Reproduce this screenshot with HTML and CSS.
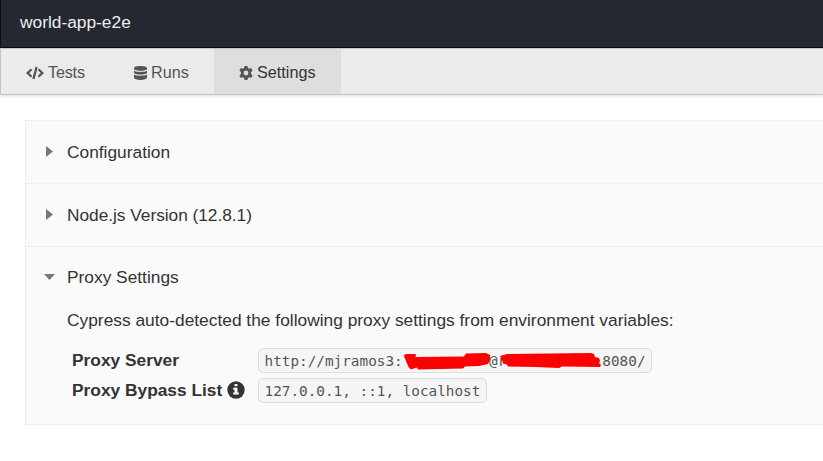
FILE: index.html
```html
<!DOCTYPE html>
<html lang="en">
<head>
<meta charset="utf-8">
<title>world-app-e2e</title>
<link rel="stylesheet" href="styles.css">
</head>
<body>
<header class="topbar"><span class="project">world-app-e2e</span></header>
<nav class="tabs">
  <a class="tab tab-tests"><svg class="icon-code" viewBox="0 0 18 14"><path d="M5.500 3.200 1.700 7l3.800 3.800M12.500 3.200 16.300 7l-3.800 3.800M10.600 1 7.400 13" fill="none" stroke="currentColor" stroke-width="2.300"/></svg><span class="label-tests">Tests</span></a>
  <a class="tab tab-runs"><svg class="icon-db" viewBox="0 0 13 14"><path d="M0 2.100C0-.7 13-.7 13 2.100v1C13 5.500 0 5.500 0 3.100zM0 4.700c2 1.600 11 1.600 13 0v2.100c0 2.400-13 2.400-13 0zM0 8.500c2 1.600 11 1.600 13 0v3c0 3.300-13 3.300-13 0z" fill="currentColor"/></svg><span class="label-runs">Runs</span></a>
  <a class="tab tab-settings active"><svg class="icon-cog" viewBox="0 0 14 14"><path fill="currentColor" fill-rule="evenodd" d="M5.500 0h3l.4 2 1.300.7 1.900-.7 1.500 2.600-1.500 1.400v2l1.500 1.400-1.500 2.600-1.900-.7-1.300.7-.4 2h-3l-.4-2-1.300-.7-1.900.7L.4 9.400 1.900 8V6L.4 4.600 1.900 2l1.900.7L5.100 2zM7 4.600a2.400 2.400 0 1 0 0 4.800 2.400 2.400 0 0 0 0-4.800z"/></svg><span class="label-settings">Settings</span></a>
</nav>
<main class="panels">
  <section class="panel"><h2 class="heading"><i class="caret"></i><span>Configuration</span></h2></section>
  <section class="panel"><h2 class="heading"><i class="caret"></i><span class="t-node">Node.js Version (12.8.1)</span></h2></section>
  <section class="panel open">
    <h2 class="heading"><i class="caret down"></i><span>Proxy Settings</span></h2>
    <p class="intro">Cypress auto-detected the following proxy settings from environment variables:</p>
    <dl class="settings">
      <dt><span>Proxy Server</span></dt>
      <dd><code>http://mjramos3:<span class="gap-a"></span>@r<span class="gap-b"></span>8080/<svg class="scribble" viewBox="0 0 394 26"><g fill="red"><path d="M146 8q0-2 3-2h7q3 0 2 2l-1 1 49-.5 2-3 20-.5 4 2v5l-2 4-9 2-14 .5-2 2-45 1-1-2-6 2q-3-2-4-6z"/><path d="M242 8l7-2 84-1 3 1 1 3 4 1 1 3-1 2 2 2-1 2-38-.5-3 1.500-24-1-27-.5-1-2-4-1-1-4z"/></g><path d="M161 13.500l12-.4M361 0" stroke="#d11" stroke-width=".7" fill="none"/></svg></code></dd>
      <dt><span>Proxy Bypass List</span><svg class="icon-info" viewBox="0 0 18 18"><circle cx="9" cy="9" r="8.700" fill="currentColor"/><path fill="#fafafa" d="M7.500 3h3v2.300h-3zM6.200 6.800h4.300v4.700h1.300v2H6.200v-2h1.300V8.800H6.200z"/></svg></dt>
      <dd><code>127.0.0.1, ::1, localhost</code></dd>
    </dl>
  </section>
</main>
</body>
</html>
```

FILE: styles.css
```css
* { box-sizing: border-box; }
body {
  margin: 0;
  overflow: hidden;
  background: #fff;
  color: #333;
  font-family: "Liberation Sans", Arial, sans-serif;
  font-size: 17.33px;
}
.topbar {
  height: 48px;
  padding: 11px 0 0 19px;
  background: #252831;
  border-left: 1px solid #0d0e12;
  border-bottom: 1px solid #08090d;
  color: #eee;
  line-height: 22px;
}
.tabs {
  display: flex;
  height: 47px;
  background: #ebebeb;
  border: 1px solid #c5c5c5;
  border-right: 0;
  box-shadow: 0 1px 3px rgba(0, 0, 0, .15);
}
.tab {
  display: flex;
  align-items: center;
  color: #555;
  font-size: 16.2px;
  padding-top: 2px;
}
.tab svg { flex: none; }
.tab-tests { width: 108px; padding-left: 25px; }
.tab-runs { width: 105px; padding-left: 25px; }
.tab-settings { width: 127px; padding-left: 25px; }
.label-tests { letter-spacing: -.2px; }
.active { background: #dedede; }
.active span { color: #333; }
.icon-code { width: 18px; height: 14px; margin-right: 4px; }
.icon-db { width: 13px; height: 14px; margin-right: 4px; }
.icon-cog { width: 14px; height: 14px; margin-right: 4px; }
.panels {
  margin: 25px 0 0 25px;
  background: #fafafa;
  border: 1px solid #eee;
  border-right: 0;
}
.panel { height: 63px; border-bottom: 1px solid #eee; }
.panel.open { height: 177px; border: 0; }
.heading {
  display: flex;
  align-items: center;
  height: 62px;
  margin: 0;
  padding-left: 20px;
  font-size: inherit;
  font-weight: 400;
}
.open .heading { height: 60px; }
.t-node { letter-spacing: -.04px; }
.caret {
  width: 7px;
  height: 11px;
  margin: -1px 14px 0 0;
  background: #777;
  clip-path: polygon(0 0, 100% 50%, 0 100%);
}
.caret.down {
  width: 11px;
  height: 6px;
  margin: 0 12px 0 -2px;
  clip-path: polygon(0 0, 100% 0, 50% 100%);
}
.intro { margin: 0; padding: 2px 0 0 41px; line-height: 22px; letter-spacing: .01px; white-space: nowrap; }
.settings {
  display: grid;
  grid-template-columns: 186px auto;
  grid-auto-rows: 30px;
  margin: 17px 0 0 46px;
}
.settings dt { display: flex; align-items: center; height: 24px; font-weight: 700; }
.settings dd { margin: 0; }
.icon-info { width: 18px; height: 18px; margin: -1px 0 0 5px; }
code {
  position: relative;
  display: inline-flex;
  height: 25px;
  align-items: center;
  padding: 1px 5.5px 0;
  border: 1px solid #ddd;
  border-radius: 5px;
  background: #f5f5f5;
  color: #555;
  font: 14.35px "DejaVu Sans Mono", monospace;
  white-space: pre;
}
.gap-a { width: 86.4px; }
.gap-b { width: 96px; }
.scribble { position: absolute; left: -1px; top: -1px; width: 394px; height: 26px; }
```
